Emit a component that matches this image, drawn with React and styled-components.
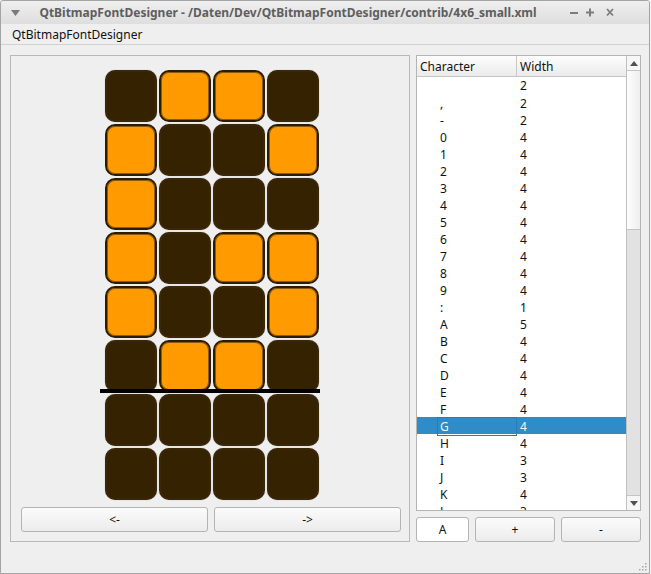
import React from 'react'
import styled, { createGlobalStyle } from 'styled-components'

const GlobalStyle = createGlobalStyle`
    html, body {
        margin: 0;
        padding: 0;
        background: #f4f4f4;
    }
    body {
        font-family: 'Noto Sans', 'Open Sans', sans-serif;
        font-size: 12px;
        color: #1b1b1b;
    }
`

const D = 0
const O = 1
const PIXELS = [
    [D, O, O, D],
    [O, D, D, O],
    [O, D, D, D],
    [O, D, O, O],
    [O, D, D, O],
    [D, O, O, D],
    [D, D, D, D],
    [D, D, D, D],
]

const CHARS = [
    [' ', 2], [',', 2], ['-', 2], ['0', 4], ['1', 4], ['2', 4], ['3', 4], ['4', 4],
    ['5', 4], ['6', 4], ['7', 4], ['8', 4], ['9', 4], [':', 1], ['A', 5], ['B', 4],
    ['C', 4], ['D', 4], ['E', 4], ['F', 4], ['G', 4], ['H', 4], ['I', 3], ['J', 3],
    ['K', 4], ['L', 3],
]

const Window = styled.div`
    width: 650px;
    height: 574px;
    box-sizing: border-box;
    border: 1px solid #a4a4a4;
    border-radius: 3px 3px 0 0;
    background: #efefef;
    display: flex;
    flex-direction: column;
    position: relative;
    overflow: hidden;
`

const TitleBar = styled.div`
    height: 23px;
    display: flex;
    align-items: center;
    background: linear-gradient(#efefef, #dedede);
    color: #5e5e5e;
    position: relative;
`

const TitleText = styled.div`
    flex: 1;
    text-align: center;
    font-weight: bold;
    font-size: 12px;
    padding-left: 6px;
`

const TitleButtons = styled.div`
    display: flex;
    gap: 8px;
    padding-right: 35px;
    padding-left: 20px;
    align-items: center;
`

const MenuBar = styled.div`
    height: 20px;
    border-bottom: 1px solid #d2d2d2;
    display: flex;
    align-items: center;
    padding-left: 11px;
    color: #111;
`

const Content = styled.div`
    display: flex;
    gap: 6px;
    padding: 10px 8px 0 9px;
`

const GroupBox = styled.div`
    width: 400px;
    height: 487px;
    flex-shrink: 0;
    box-sizing: border-box;
    border: 1px solid #b9b9b9;
    padding: 14px 8px 0 10px;
    display: flex;
    flex-direction: column;
    align-items: stretch;
`

const GridWrap = styled.div`
    position: relative;
    align-self: center;
    margin-left: 2px;
`

const PixelGrid = styled.div`
    display: grid;
    grid-template-columns: repeat(4, 52px);
    grid-auto-rows: 52px;
    gap: 2px;
`

const Pixel = styled.div`
    box-sizing: border-box;
    border-radius: 10px;
    background: ${p => (p.$on ? '#ff9a00' : '#352200')};
    border: 2px solid ${p => (p.$on ? '#2c1c02' : '#3a2708')};
    box-shadow: ${p => (p.$on ? 'inset 0 0 0 1px #8a5a10' : '0 0 1px rgba(0,0,0,.35)')};
`

const Baseline = styled.div`
    position: absolute;
    left: -5px;
    width: 220px;
    top: 319px;
    height: 4px;
    background: #000;
`

const NavRow = styled.div`
    display: flex;
    gap: 6px;
    margin-top: 7px;
`

const Button = styled.button`
    flex: ${p => p.$flex || 1};
    height: 25px;
    box-sizing: border-box;
    border: 1px solid #b4b4b4;
    border-radius: 3px;
    background: ${p => (p.$plain ? '#fff' : 'linear-gradient(#fbfbfb, #ececec)')};
    font-family: inherit;
    font-size: 12px;
    color: #111;
    padding: 0;
    cursor: pointer;
`

const RightColumn = styled.div`
    width: 225px;
    flex-shrink: 0;
    display: flex;
    flex-direction: column;
    gap: 6px;
`

const TreeBox = styled.div`
    height: 456px;
    box-sizing: border-box;
    border: 1px solid #b4b4b4;
    background: #fff;
    display: flex;
    overflow: hidden;
`

const TreeMain = styled.div`
    flex: 1;
    display: flex;
    flex-direction: column;
    overflow: hidden;
`

const Header = styled.div`
    display: grid;
    grid-template-columns: 100px 1fr;
    height: 20px;
    border-bottom: 1px solid #c4c4c4;
    background: linear-gradient(#fdfdfd, #ebebeb);
    flex-shrink: 0;
`

const HeaderCell = styled.div`
    display: flex;
    align-items: center;
    padding-left: 3px;
    border-right: ${p => (p.$sep ? '1px solid #c8c8c8' : 'none')};
    color: #111;
`

const Row = styled.div`
    display: grid;
    grid-template-columns: 100px 1fr;
    height: 17px;
    flex-shrink: 0;
    background: ${p => (p.$selected ? '#308cc6' : 'transparent')};
    color: ${p => (p.$selected ? '#eef6fc' : '#111')};
`

const CharCell = styled.div`
    margin-left: 20px;
    display: flex;
    align-items: center;
    box-sizing: border-box;
    border: 1px solid ${p => (p.$focus ? '#2a7cb4' : 'transparent')};
    padding-left: 2px;
`

const WidthCell = styled.div`
    display: flex;
    align-items: center;
    padding-left: 3px;
`

const ScrollBar = styled.div`
    width: 14px;
    box-sizing: border-box;
    border-left: 1px solid #c0c0c0;
    display: flex;
    flex-direction: column;
    background: #e2e2e2;
`

const ScrollArrow = styled.div`
    height: 14px;
    background: #f6f6f6;
    border-${p => (p.$down ? 'top' : 'bottom')}: 1px solid #c4c4c4;
    display: flex;
    align-items: center;
    justify-content: center;
    flex-shrink: 0;
`

const ScrollThumb = styled.div`
    height: 158px;
    background: linear-gradient(90deg, #fdfdfd, #eeeeee);
    border-bottom: 1px solid #c4c4c4;
`

const ScrollTrack = styled.div`
    flex: 1;
`

const ButtonRow = styled.div`
    display: flex;
    gap: 6px;
`

const Grip = styled.svg`
    position: absolute;
    right: 2px;
    bottom: 2px;
`

const Triangle = ({ down }) => (
    <svg width="8" height="5" viewBox="0 0 8 5">
        <polygon points={down ? '0,0 8,0 4,5' : '0,5 8,5 4,0'} fill="#505050" />
    </svg>
)

function TitleBarButtons() {
    return (
        <TitleButtons>
            <svg width="8" height="9" viewBox="0 0 8 9">
                <rect x="0" y="4" width="8" height="2" fill="#7c7c7c" />
            </svg>
            <svg width="8" height="9" viewBox="0 0 8 9">
                <rect x="0" y="3.5" width="8" height="2" fill="#7c7c7c" />
                <rect x="3" y="0.5" width="2" height="8" fill="#7c7c7c" />
            </svg>
            <svg width="8" height="9" viewBox="0 0 8 9" style={{ marginLeft: 4 }}>
                <path d="M1 1 L7 7.5 M7 1 L1 7.5" stroke="#7c7c7c" strokeWidth="1.8" />
            </svg>
        </TitleButtons>
    )
}

export default function App() {
    return (
        <>
            <GlobalStyle />
            <Window>
                <TitleBar>
                    <svg width="9" height="6" viewBox="0 0 9 6" style={{ marginLeft: 10 }}>
                        <polygon points="0,0 9,0 4.5,6" fill="#7a7a7a" />
                    </svg>
                    <TitleText>QtBitmapFontDesigner - /Daten/Dev/QtBitmapFontDesigner/contrib/4x6_small.xml</TitleText>
                    <TitleBarButtons />
                </TitleBar>
                <MenuBar>QtBitmapFontDesigner</MenuBar>
                <Content>
                    <GroupBox>
                        <GridWrap>
                            <PixelGrid>
                                {PIXELS.flatMap((row, r) =>
                                    row.map((v, c) => <Pixel key={`${r}-${c}`} $on={v === O} />)
                                )}
                            </PixelGrid>
                            <Baseline />
                        </GridWrap>
                        <NavRow>
                            <Button>&lt;-</Button>
                            <Button>-&gt;</Button>
                        </NavRow>
                    </GroupBox>
                    <RightColumn>
                        <TreeBox>
                            <TreeMain>
                                <Header>
                                    <HeaderCell $sep>Character</HeaderCell>
                                    <HeaderCell>Width</HeaderCell>
                                </Header>
                                {CHARS.map(([ch, w]) => (
                                    <Row key={ch} $selected={ch === 'G'}>
                                        <CharCell $focus={ch === 'G'}>{ch}</CharCell>
                                        <WidthCell>{w}</WidthCell>
                                    </Row>
                                ))}
                            </TreeMain>
                            <ScrollBar>
                                <ScrollArrow><Triangle /></ScrollArrow>
                                <ScrollThumb />
                                <ScrollTrack />
                                <ScrollArrow $down><Triangle down /></ScrollArrow>
                            </ScrollBar>
                        </TreeBox>
                        <ButtonRow>
                            <Button $plain $flex="0 0 53px">A</Button>
                            <Button>+</Button>
                            <Button>-</Button>
                        </ButtonRow>
                    </RightColumn>
                </Content>
                <Grip width="9" height="9" viewBox="0 0 9 9">
                    {[[7, 1], [7, 4], [7, 7], [4, 4], [4, 7], [1, 7]].map(([x, y]) => (
                        <rect key={`${x}${y}`} x={x} y={y} width="1.5" height="1.5" fill="#a8a8a8" />
                    ))}
                </Grip>
            </Window>
        </>
    )
}
